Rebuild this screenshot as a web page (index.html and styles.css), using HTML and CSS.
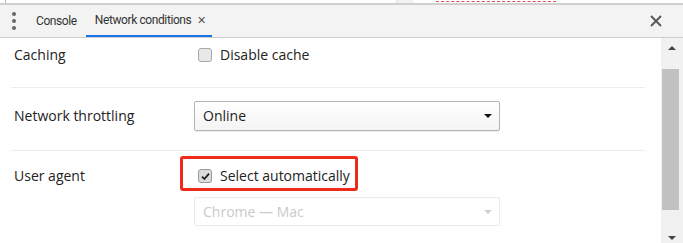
FILE: index.html
```html
<!DOCTYPE html>
<html lang="en">
<head>
  <meta charset="UTF-8">
  <title>Network conditions</title>
  <link rel="stylesheet" href="styles.css">
</head>
<body>

<div class="topStrip">
  <span class="edge"></span>
  <span class="paneEdge"></span>
  <span class="styleCut"></span>
</div>

<div class="tabbar">
  <span class="kebab"><i></i><i></i><i></i></span>
  <span class="tab">Console</span>
  <span class="tab active">Network conditions <b class="tabClose">&#x2715;</b></span>
  <span class="spacer"></span>
  <svg class="drawerClose" width="12" height="12" viewBox="0 0 12 12">
    <path d="M1 1L11 11M11 1L1 11" stroke="#555" stroke-width="1.8"/>
  </svg>
</div>

<div class="main">
  <div class="panel">
    <div class="row rowCache">
      <div class="label">Caching</div>
      <div class="ctrl">
        <label class="check"><span class="box"></span>Disable cache</label>
      </div>
    </div>
    <div class="row rowThrottle">
      <div class="label">Network throttling</div>
      <div class="ctrl">
        <div class="select">Online<span class="arrow"></span></div>
      </div>
    </div>
    <div class="row rowAgent">
      <div class="label">User agent</div>
      <div class="ctrl">
        <label class="check checked"><span class="box">
          <svg width="9" height="9" viewBox="0 0 9 9"><path d="M1 4.6L3.4 7L8 1.6" fill="none" stroke="#222" stroke-width="1.8"/></svg>
        </span>Select automatically</label>
        <div class="highlight"></div>
        <div class="select disabled">Chrome &mdash; Mac<span class="arrow"></span></div>
      </div>
    </div>
  </div>
  <div class="scrollbar">
    <span class="up"></span>
    <span class="thumb"></span>
    <span class="down"></span>
  </div>
</div>

</body>
</html>
```

FILE: styles.css
```css
* { margin: 0; padding: 0; box-sizing: border-box; }
body { width: 683px; height: 243px; overflow: hidden; background: #fff;
  font-family: "Open Sans", "Noto Sans", sans-serif; font-size: 14px; color: #222; }

.topStrip { height: 5px; background: #fff; border-bottom: 2px solid #cfcfcf; position: relative; }
.topStrip .edge { position: absolute; left: 5px; top: 0; width: 1px; height: 3px; background: #bbb; }
.topStrip .paneEdge { position: absolute; left: 396px; top: 0; width: 18px; height: 3px;
  background: #f2f2f2; border-left: 1px solid #ddd; }
.topStrip .styleCut { position: absolute; left: 436px; top: 1px; width: 120px; height: 2px;
  border-top: 1px dashed #e05050; }

.tabbar { height: 33px; background: #f3f3f3; border-bottom: 1px solid #cccccc;
  display: flex; align-items: stretch; }
.kebab { width: 27px; display: flex; flex-direction: column; align-items: center;
  justify-content: center; gap: 3px; padding-left: 1px; }
.kebab i { width: 4px; height: 4px; border-radius: 50%; background: #666; }
.tab { display: flex; align-items: center; padding: 0 9px; color: #333;
  font-family: Roboto, "Open Sans", sans-serif; font-size: 12px; letter-spacing: -0.4px; }
.tab.active { border-bottom: 2px solid #1a73e8; padding-right: 6px; }
.tabClose { font-weight: normal; font-size: 11px; color: #555; margin-left: 6px; }
.spacer { flex: 1; }
.drawerClose { align-self: center; margin-right: 21px; }

.main { display: flex; height: 205px; }
.panel { flex: 1; }
.row { display: flex; margin: 0 16px 0 11px; border-bottom: 1px solid #ececec; }
.label { width: 183px; padding-left: 3px; line-height: 20px; }
.ctrl { flex: 1; position: relative; }

.rowCache { height: 50px; padding-top: 7px; }
.rowThrottle { height: 63px; padding-top: 13px; }
.rowThrottle .label { padding-top: 5px; }
.rowAgent { height: 92px; padding-top: 15px; border-bottom: none; }

.check { display: flex; align-items: center; line-height: 20px; margin-left: 4px; }
.check .box { width: 14px; height: 14px; border: 1px solid #a8a8a8; border-radius: 3px;
  background: #e8e8e8; margin-right: 8px; display: flex; align-items: center; justify-content: center; }
.checked .box { background: #dcdcdc; border-color: #999; }

.highlight { position: absolute; left: -14px; top: -10px; width: 178px; height: 35px;
  border: 3px solid #ee2a1b; border-radius: 3px; }

.select { width: 306px; height: 30px; border: 1px solid #b5b5b5; border-radius: 2px;
  background: linear-gradient(#ffffff, #f4f4f4); box-shadow: 0 1px 1px rgba(0,0,0,0.08);
  padding-left: 8px; line-height: 28px; position: relative; }
.select .arrow { position: absolute; right: 7px; top: 12px; width: 0; height: 0;
  border-left: 4px solid transparent; border-right: 4px solid transparent; border-top: 4px solid #111; }
.select.disabled { margin-top: 11px; height: 29px; border-color: #ebebeb; background: #fff;
  box-shadow: none; color: #cacaca; }
.select.disabled .arrow { border-top-color: #cfcfcf; }

.scrollbar { width: 22px; background: #f1f1f1; position: relative; }
.scrollbar .up { position: absolute; left: 7px; top: 8px; width: 0; height: 0;
  border-left: 4px solid transparent; border-right: 4px solid transparent; border-bottom: 4px solid #444; }
.scrollbar .thumb { position: absolute; left: 1px; top: 31px; width: 17px; height: 141px; background: #c1c1c1; }
.scrollbar .down { position: absolute; left: 7px; bottom: 3px; width: 0; height: 0;
  border-left: 4px solid transparent; border-right: 4px solid transparent; border-top: 4px solid #444; }
```
